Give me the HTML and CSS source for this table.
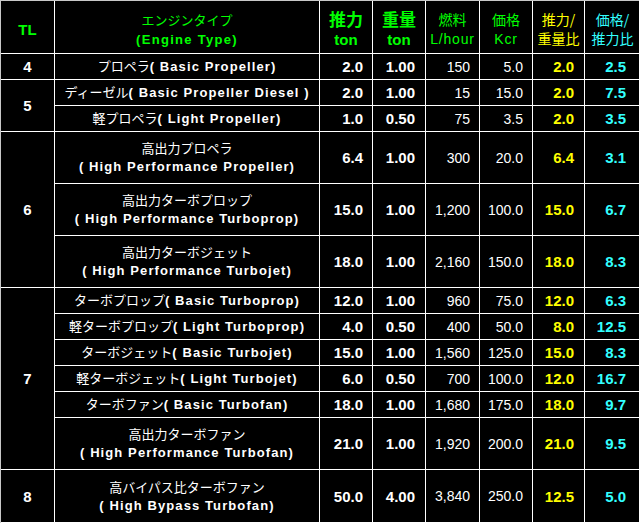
FILE: index.html
```html
<!DOCTYPE html>
<html lang="ja">
<head>
<meta charset="utf-8">
<title>Engine Table</title>
<link rel="stylesheet" href="styles.css">
</head>
<body>
<table class="engines">
  <colgroup>
    <col class="c-tl"><col class="c-name"><col class="c-num"><col class="c-num"><col class="c-fuel"><col class="c-num"><col class="c-ratio"><col class="c-cost">
  </colgroup>
  <thead>
    <tr class="head">
      <th class="h-tl">TL</th>
      <th class="h-name"><span class="ja">エンジンタイプ</span><br>(Engine Type)</th>
      <th class="h-big"><span class="big">推力</span><br>ton</th>
      <th class="h-big"><span class="big">重量</span><br>ton</th>
      <th class="h-thin">燃料<br><span class="unit">L/hour</span></th>
      <th class="h-thin">価格<br><span class="unit">Kcr</span></th>
      <th class="h-thin yellow">推力/<br>重量比</th>
      <th class="h-thin cyan">価格/<br>推力比</th>
    </tr>
  </thead>
  <tbody>
    <tr class="r1">
      <td class="tl">4</td>
      <td class="name"><span class="ja">プロペラ</span>( Basic Propeller)</td>
      <td class="thr">2.0</td><td class="wt">1.00</td><td class="fuel">150</td><td class="price">5.0</td><td class="ratio">2.0</td><td class="cost">2.5</td>
    </tr>
    <tr class="r1">
      <td class="tl" rowspan="2">5</td>
      <td class="name"><span class="ja">ディーゼル</span>( Basic Propeller Diesel )</td>
      <td class="thr">2.0</td><td class="wt">1.00</td><td class="fuel">15</td><td class="price">15.0</td><td class="ratio">2.0</td><td class="cost">7.5</td>
    </tr>
    <tr class="r1">
      <td class="name"><span class="ja">軽プロペラ</span>( Light Propeller)</td>
      <td class="thr">1.0</td><td class="wt">0.50</td><td class="fuel">75</td><td class="price">3.5</td><td class="ratio">2.0</td><td class="cost">3.5</td>
    </tr>
    <tr class="r2">
      <td class="tl" rowspan="3">6</td>
      <td class="name"><span class="ja">高出力プロペラ</span><br>( High Performance Propeller)</td>
      <td class="thr">6.4</td><td class="wt">1.00</td><td class="fuel">300</td><td class="price">20.0</td><td class="ratio">6.4</td><td class="cost">3.1</td>
    </tr>
    <tr class="r2">
      <td class="name"><span class="ja">高出力ターボプロップ</span><br>( High Performance Turboprop)</td>
      <td class="thr">15.0</td><td class="wt">1.00</td><td class="fuel">1,200</td><td class="price">100.0</td><td class="ratio">15.0</td><td class="cost">6.7</td>
    </tr>
    <tr class="r2">
      <td class="name"><span class="ja">高出力ターボジェット</span><br>( High Performance Turbojet)</td>
      <td class="thr">18.0</td><td class="wt">1.00</td><td class="fuel">2,160</td><td class="price">150.0</td><td class="ratio">18.0</td><td class="cost">8.3</td>
    </tr>
    <tr class="r1">
      <td class="tl" rowspan="6">7</td>
      <td class="name"><span class="ja">ターボプロップ</span>( Basic Turboprop)</td>
      <td class="thr">12.0</td><td class="wt">1.00</td><td class="fuel">960</td><td class="price">75.0</td><td class="ratio">12.0</td><td class="cost">6.3</td>
    </tr>
    <tr class="r1">
      <td class="name"><span class="ja">軽ターボプロップ</span>( Light Turboprop)</td>
      <td class="thr">4.0</td><td class="wt">0.50</td><td class="fuel">400</td><td class="price">50.0</td><td class="ratio">8.0</td><td class="cost">12.5</td>
    </tr>
    <tr class="r1">
      <td class="name"><span class="ja">ターボジェット</span>( Basic Turbojet)</td>
      <td class="thr">15.0</td><td class="wt">1.00</td><td class="fuel">1,560</td><td class="price">125.0</td><td class="ratio">15.0</td><td class="cost">8.3</td>
    </tr>
    <tr class="r1">
      <td class="name"><span class="ja">軽ターボジェット</span>( Light Turbojet)</td>
      <td class="thr">6.0</td><td class="wt">0.50</td><td class="fuel">700</td><td class="price">100.0</td><td class="ratio">12.0</td><td class="cost">16.7</td>
    </tr>
    <tr class="r1">
      <td class="name"><span class="ja">ターボファン</span>( Basic Turbofan)</td>
      <td class="thr">18.0</td><td class="wt">1.00</td><td class="fuel">1,680</td><td class="price">175.0</td><td class="ratio">18.0</td><td class="cost">9.7</td>
    </tr>
    <tr class="r2">
      <td class="name"><span class="ja">高出力ターボファン</span><br>( High Performance Turbofan)</td>
      <td class="thr">21.0</td><td class="wt">1.00</td><td class="fuel">1,920</td><td class="price">200.0</td><td class="ratio">21.0</td><td class="cost">9.5</td>
    </tr>
    <tr class="r2 last">
      <td class="tl">8</td>
      <td class="name"><span class="ja">高バイパス比ターボファン</span><br>( High Bypass Turbofan)</td>
      <td class="thr">50.0</td><td class="wt">4.00</td><td class="fuel">3,840</td><td class="price">250.0</td><td class="ratio">12.5</td><td class="cost">5.0</td>
    </tr>
  </tbody>
</table>
</body>
</html>
```

FILE: styles.css
```css
html {
  overflow: hidden;
  background: #000;
}
body {
  margin: 0;
  background: #000;
  font-family: "Liberation Sans", "Noto Sans CJK JP", sans-serif;
  color: #fff;
}
.engines {
  table-layout: fixed;
  width: 641px;
  border-collapse: separate;
  border-spacing: 0;
  border-top: 1px solid #c8c8c8;
  border-left: 1px solid #c8c8c8;
  background: #000;
}
.c-tl { width: 54px; }
.c-name { width: 265px; }
.c-num { width: 53px; }
.c-fuel { width: 54px; }
.c-ratio { width: 52px; }
.c-cost { width: 56px; }

.engines th,
.engines td {
  box-sizing: border-box;
  border-right: 1px solid #fff;
  border-bottom: 1px solid #fff;
  padding: 0;
  vertical-align: middle;
  white-space: nowrap;
  overflow: hidden;
}
.head th {
  height: 53px;
  padding-top: 4px;
  text-align: center;
  color: #00ff00;
  font-weight: normal;
}
.r1 td { height: 26px; }
.r2 td { height: 52px; }
.last td { height: 53px; }

.ja {
  font-family: "Noto Sans CJK JP", sans-serif;
  font-weight: normal;
}

.h-tl {
  font-size: 15px;
  font-weight: bold !important;
}
.h-name {
  font-size: 13px;
  font-weight: bold !important;
  letter-spacing: 1.3px;
  line-height: 19px;
}
.h-name .ja { letter-spacing: 0; }
.h-big {
  font-size: 15px;
  font-weight: bold !important;
  line-height: 19px;
}
.big {
  font-family: "Noto Sans CJK JP", sans-serif;
  font-size: 17px;
  font-weight: bold;
}
.h-thin {
  font-family: "Noto Sans CJK JP", sans-serif;
  font-size: 14px;
  line-height: 19px;
}
.unit {
  font-family: "Liberation Sans", sans-serif;
  letter-spacing: 0.8px;
}
.head .yellow { color: #ffff00; }
.head .cyan { color: #33ffff; }

.tl {
  text-align: center;
  font-size: 15px;
  font-weight: bold;
}
.name {
  text-align: center;
  font-size: 13px;
  font-weight: bold;
  letter-spacing: 1.1px;
  line-height: 18px;
}
.name .ja { letter-spacing: 0; }

.thr, .wt, .fuel, .price, .ratio, .cost {
  text-align: right;
  padding-right: 9px !important;
}
.thr, .wt, .ratio, .cost {
  font-size: 15px;
  font-weight: bold;
}
.wt, .ratio { padding-right: 10px !important; }
.fuel, .price {
  font-size: 14px;
  font-weight: normal;
}
.ratio { color: #ffff00; }
.cost {
  color: #33ffff;
  padding-right: 14px !important;
}
```
